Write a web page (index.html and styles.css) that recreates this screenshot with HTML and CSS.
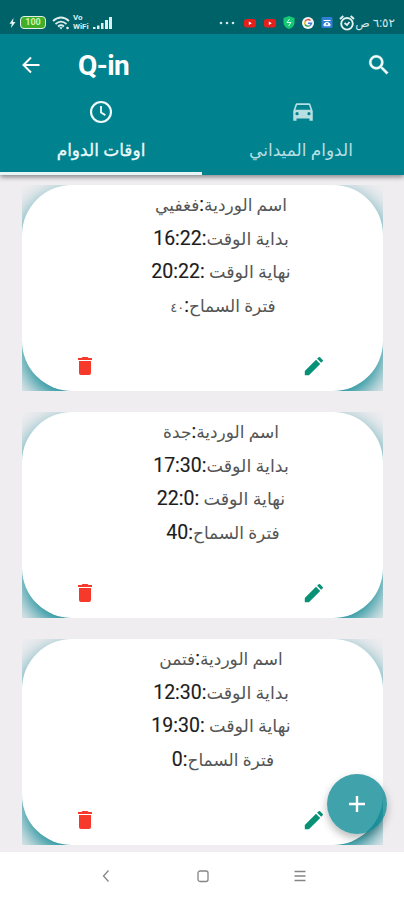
FILE: index.html
```html
<!DOCTYPE html>
<html lang="ar">
<head>
<meta charset="utf-8">
<title>Q-in</title>
<link rel="stylesheet" href="styles.css">
</head>
<body>
<svg class="defs" width="0" height="0">
  <symbol id="trash" viewBox="0 0 24 24"><path d="M6 19a2 2 0 0 0 2 2h8a2 2 0 0 0 2-2V7H6zM19 4h-3.500l-1-1h-5l-1 1H5v2h14z"/></symbol>
  <symbol id="pencil" viewBox="0 0 24 24"><path d="M2.800 17.100V21.200h4.100L18.200 10l-4.200-4.200zM20.710 7.340a1 1 0 0 0 0-1.410l-2.640-2.640a1 1 0 0 0-1.410 0l-1.530 1.530 4.050 4.050z"/></symbol>
  <symbol id="youtube" viewBox="0 0 12 10"><rect y="1" width="12" height="8.500" rx="2.500" fill="#e3201b"/><path d="M4.800 3.500v3.500l3-1.750z" fill="#fff"/></symbol>
</svg>
<header class="top">
  <div class="status">
    <div class="status-left">
      <svg width="7" height="12" viewBox="0 0 7 12"><path d="M4.500 1L0.500 6.700h2.300L2 11l4.500-6H4z" fill="#e6f3f3"/></svg>
      <span class="battery">100</span>
      <svg class="wifi" width="18" height="14" viewBox="0 0 18 14" fill="none" stroke="#dceeee" stroke-width="1.700"><path d="M1 5q8-7 16 0M3.500 8q5.500-4.800 11 0M6 10.500q3-2.500 6 0"/><path d="M7.200 11.300h3.600L9 13.600z" fill="#dceeee" stroke="none"/><circle cx="15.500" cy="12" r="1.300" fill="#dceeee" stroke="none"/></svg>
      <span class="vowifi"><span>Vo</span><span>WiFi</span></span>
      <svg class="signal" width="20" height="12" viewBox="0 0 20 12" fill="#dceeee"><path d="M0 10h2.500v2H0zM4 8.500h2.500V12H4zM8 6h2.500v6H8zM12 3h3v9h-3zM16 0h3v12h-3z"/></svg>
    </div>
    <div class="status-right">
      <svg class="dots" width="16" height="4" viewBox="0 0 16 4" fill="#cfe5e6"><circle cx="2" cy="2" r="1.300"/><circle cx="8" cy="2" r="1.300"/><circle cx="14" cy="2" r="1.300"/></svg>
      <svg width="12" height="10"><use href="#youtube"/></svg>
      <svg width="12" height="10"><use href="#youtube"/></svg>
      <svg width="12" height="13" viewBox="0 0 12 13"><path d="M6 0l5.500 2v5Q11 11 6 13 1 11 .5 7V2z" fill="#16c774"/><path d="M6.500 3L4 6.500h4L5.500 10" stroke="#c9ffe6" fill="none"/></svg>
      <svg width="12" height="12" viewBox="0 0 12 12" fill="none"><circle cx="6" cy="6" r="6" fill="#f4f7f8"/><path d="M8.500 3.500A3.500 3.500 0 0 0 3 4.500" stroke="#e24b40" stroke-width="1.500"/><path d="M3 4.500a3.500 3.500 0 0 0 0 3" stroke="#eab52f" stroke-width="1.500"/><path d="M3 7.500a3.500 3.500 0 0 0 5 1" stroke="#42a35a" stroke-width="1.500"/><path d="M8 8.500a3.500 3.500 0 0 0 1.500-2.300H6" stroke="#447ee0" stroke-width="1.500"/></svg>
      <svg width="12" height="11" viewBox="0 0 12 11"><rect x=".5" width="11" height="11" rx="1.500" fill="#317fd4"/><path d="M2.500 3.500h7M3 8.700V7q3-3.500 6 0v1.700z" stroke="#fff" fill="#e8f4ff"/><circle cx="6" cy="7" r="1" fill="#317fd4"/></svg>
      <svg class="alarm" width="16" height="16" viewBox="0 0 16 16" fill="none" stroke="#e2f0f0" stroke-width="1.900"><circle cx="8" cy="8.800" r="5.800"/><path d="M1 4l3.300-3M15 4l-3.300-3M5.500 8l2.500 2 2.500-3"/></svg>
      <span class="clock" dir="rtl">٦:٥٢ ص</span>
    </div>
  </div>
  <div class="bar">
    <svg class="back" width="18" height="18" viewBox="0 0 18 18" fill="none" stroke="#fff" stroke-width="2"><path d="M17.500 9H2M9 1.500L1.500 9 9 16.500"/></svg>
    <h1>Q-in</h1>
    <svg class="search" width="26" height="26" viewBox="0 0 24 24" fill="#f4fbfb" stroke="#f4fbfb" stroke-width=".4"><path d="M15.500 14h-.790l-.280-.270A6.500 6.500 0 1 0 13.730 14.430l.270.280v.790l5 4.990L20.490 19zm-6 0a4.500 4.500 0 1 1 0-9 4.500 4.500 0 0 1 0 9z"/></svg>
  </div>
  <nav class="tabs">
    <div class="tab active">
      <svg width="26" height="26" viewBox="0 0 24 24" fill="none" stroke="#effafa" stroke-width="2"><circle cx="12" cy="12" r="9.200"/><path d="M12 6.500v6l4 2.400" stroke-width="1.700"/></svg>
      <span dir="rtl">اوقات الدوام</span>
    </div>
    <div class="tab field">
      <svg width="26" height="26" viewBox="0 0 24 24" fill="#b7dfe2"><path d="M18.920 5.010A1.500 1.500 0 0 0 17.500 4h-11c-.660 0-1.210.420-1.420 1.010L3 11v9h3v-2h12v2h3v-9zM6.500 15a1.500 1.500 0 1 1 0-3 1.500 1.500 0 0 1 0 3zm11 0a1.500 1.500 0 1 1 0-3 1.500 1.500 0 0 1 0 3zM5 10l1.500-4.500h11L19 10z"/></svg>
      <span dir="rtl">الدوام الميداني</span>
    </div>
  </nav>
</header>
<main class="list">
  <article class="slot"><div class="card">
    <div class="lines" dir="rtl">
      <p>اسم الوردية<b>:</b>فغفيي</p>
      <p class="time">بداية الوقت<b>:16:22</b></p>
      <p class="time">نهاية الوقت <b>:20:22</b></p>
      <p class="grace">فترة السماح<b>:</b><small>٤٠</small></p>
    </div>
    <div class="actions"><svg class="trash"><use href="#trash"/></svg><svg class="pencil"><use href="#pencil"/></svg></div>
  </div></article>
  <article class="slot"><div class="card">
    <div class="lines" dir="rtl">
      <p>اسم الوردية<b>:</b>جدة</p>
      <p class="time">بداية الوقت<b>:17:30</b></p>
      <p class="time">نهاية الوقت <b>:22:0</b></p>
      <p class="grace">فترة السماح<b>:40</b></p>
    </div>
    <div class="actions"><svg class="trash"><use href="#trash"/></svg><svg class="pencil"><use href="#pencil"/></svg></div>
  </div></article>
  <article class="slot"><div class="card">
    <div class="lines" dir="rtl">
      <p>اسم الوردية<b>:</b>فتمن</p>
      <p class="time">بداية الوقت<b>:12:30</b></p>
      <p class="time">نهاية الوقت <b>:19:30</b></p>
      <p class="grace">فترة السماح<b>:0</b></p>
    </div>
    <div class="actions"><svg class="trash"><use href="#trash"/></svg><svg class="pencil"><use href="#pencil"/></svg></div>
  </div></article>
</main>
<div class="fab"><svg width="16" height="16" viewBox="0 0 16 16" stroke="#fff" stroke-width="2.400"><path d="M8 0v16M0 8h16"/></svg></div>
<footer class="nav">
  <svg width="12" height="14" viewBox="0 0 12 14"><path d="M8.500 1.500L3.500 7l5 5.500"/></svg>
  <svg width="12" height="14" viewBox="0 0 12 14"><rect x="1" y="2" width="10" height="10.500" rx="2"/></svg>
  <svg width="12" height="14" viewBox="0 0 12 14"><path d="M.5 2.500h11M.5 7h11M.5 11.500h11"/></svg>
</footer>
</body>
</html>
```
FILE: styles.css
```css
* { box-sizing: border-box; }
body {
  margin: 0;
  width: 404px;
  height: 900px;
  overflow: hidden;
  display: flex;
  flex-direction: column;
  background: #efedf0;
  font-family: Roboto, "DejaVu Sans", sans-serif;
  position: relative;
}
svg { display: block; flex: none; }
.defs { position: absolute; }
.top {
  height: 175px;
  flex: none;
  background: #00838f;
  color: #fff;
  box-shadow: 0 2px 5px rgba(0, 0, 0, .45);
  z-index: 1;
}
.status {
  height: 34px;
  padding: 10px 9px 0 9px;
  display: flex;
  justify-content: space-between;
  background: #006269;
}
.status-left, .status-right { display: flex; align-items: center; height: 25px; }
.battery {
  width: 26px;
  height: 13px;
  margin-left: 4px;
  border: 1.500px solid #e1f1ea;
  border-radius: 4px;
  background: #42ad28;
  color: #c9f5b0;
  font-size: 9px;
  font-weight: 700;
  line-height: 10px;
  text-align: center;
}
.wifi { margin-left: 6px; }
.vowifi {
  display: flex;
  flex-direction: column;
  gap: 1px;
  width: 18px;
  margin-left: 3px;
  font-size: 8px;
  font-weight: 700;
  line-height: 8px;
  color: #dceeee;
}
.vowifi span { height: 8px; }
.signal { margin-left: 2px; }
.status-right { gap: 7.300px; }
.dots { margin-right: 2px; }
.alarm { margin-left: -2px; margin-right: -4px; }
.clock { width: 37px; font-size: 12px; white-space: nowrap; color: #d5e8e9; }
.bar { height: 62px; padding: 0 12px 0 22px; display: flex; align-items: center; }
.bar h1 {
  margin: 1px auto 0 38px;
  font-size: 28px;
  line-height: 34px;
  font-weight: 700;
  letter-spacing: -.6px;
}
.tabs { display: flex; height: 79px; }
.tab {
  flex: 1;
  display: flex;
  flex-direction: column;
  align-items: center;
  padding-top: 3px;
  color: #b7dfe2;
  font-size: 17px;
}
.tab span { line-height: 26px; margin-top: 12px; white-space: nowrap; }
.tab.active { color: #effafa; border-bottom: 3px solid #e8f5f6; }
.tab.active span { -webkit-text-stroke: .3px #effafa; }
.tab.field span { margin-right: 4px; }
.list {
  flex: 1;
  padding: 10px 21px 0 22px;
  display: flex;
  flex-direction: column;
  gap: 21px;
  overflow: hidden;
}
.slot { height: 206px; flex: none; overflow: hidden; }
.card {
  height: 206px;
  border-radius: 50px;
  background: #fff;
  box-shadow: 0 10px 25px #00838f;
}
.lines { padding: 4px 0 0 37px; height: 154px; direction: rtl; }
.lines p {
  margin: 0;
  height: 33.500px;
  line-height: 33px;
  font-size: 17px;
  text-align: center;
  white-space: nowrap;
  color: #555;
}
.lines .time { font-size: 17.500px; }
.lines .grace { padding-left: 4px; }
.lines b { font-size: 19.500px; line-height: 1; font-weight: 400; color: #1c1c1c; -webkit-text-stroke: .15px #1c1c1c; }
.lines small { font-size: 13px; }
.actions { display: flex; justify-content: space-between; padding: 15px 57px 0 51px; }
.trash { width: 24px; height: 24px; fill: #f6392b; }
.pencil { width: 24px; height: 24px; fill: #079276; }
.fab {
  position: absolute;
  left: 327px;
  top: 774px;
  width: 60px;
  height: 60px;
  border-radius: 50%;
  background: rgba(0, 131, 143, .75);
  box-shadow: 0 4px 8px rgba(0, 0, 0, .28);
  display: flex;
  align-items: center;
  justify-content: center;
}
.nav {
  height: 48px;
  flex: none;
  background: #fff;
  display: flex;
  align-items: center;
  justify-content: center;
  gap: 85px;
  padding-left: 2px;
}
.nav svg { fill: none; stroke: #858585; stroke-width: 1.300; }
```
